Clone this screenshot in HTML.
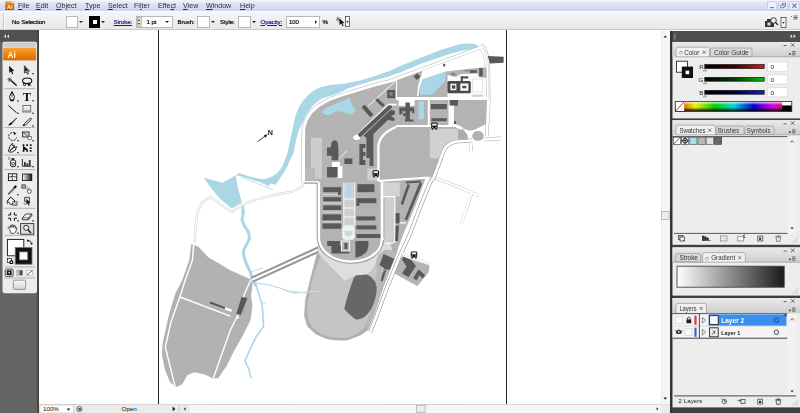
<!DOCTYPE html>
<html>
<head>
<meta charset="utf-8">
<title>Adobe Illustrator</title>
<style>
html,body{margin:0;padding:0;}
body{width:800px;height:413px;overflow:hidden;position:relative;background:#fff;font-family:"Liberation Sans",sans-serif;font-size:7.5px;color:#222;}
.abs{position:absolute;}
#menubar span,#ctrl .t,#rdock svg,#status svg,#ldock svg,#canvas svg{will-change:opacity;}
#ctrl .t{-webkit-text-stroke:0.18px currentColor;}
#menubar{left:0;top:0;width:800px;height:11px;background:linear-gradient(#f6f7fc 0%,#e4e8f6 25%,#d6dcf1 65%,#cbd3ee 100%);}
#menubar span{position:absolute;top:1.9px;font-size:7.1px;line-height:9px;color:#2e2e2e;}
#ctrl{left:0;top:11px;width:800px;height:19px;background:linear-gradient(#f6f6f6,#eeeeee 50%,#e9e9e9);border-top:1px solid #fbfbfb;border-bottom:1px solid #c9c9c9;box-sizing:border-box;}
#ctrl .t{position:absolute;top:5.7px;font-size:6.1px;line-height:8px;color:#000;white-space:nowrap;letter-spacing:-0.1px;}
#ctrl .lnk{color:#1a1a9a;text-decoration:underline;}
#ctrl .box{position:absolute;background:#fff;border:1px solid #b9b9b9;box-sizing:border-box;}
.dd{position:absolute;width:0;height:0;border-left:2px solid transparent;border-right:2px solid transparent;border-top:2.5px solid #222;}
#ldock{left:0;top:30px;width:39px;height:383px;background:#646464;}
#rdock{left:670px;top:31px;width:130px;height:382px;background:#404040;}
.panel{position:absolute;left:2.5px;width:127.5px;background:#ededed;}
.tab{position:absolute;font-size:7px;line-height:9px;color:#222;box-sizing:border-box;border:1px solid #a8a8a8;border-bottom:none;border-radius:2px 2px 0 0;background:#dcdcdc;text-align:center;white-space:nowrap;}
.tab.on{background:#f1f1f1;}
.tabbar{position:absolute;left:0;right:0;background:linear-gradient(#e6e6e6,#cfcfcf);}
#canvas{left:39px;top:30px;width:622px;height:374px;background:#fff;overflow:hidden;}
#vscroll{left:661px;top:30px;width:9px;height:374px;background:#f4f4f4;}
#status{left:39px;top:404px;width:631px;height:9px;background:#e9e9e9;}
</style>
</head>
<body>
<div id="canvas" class="abs">
<svg class="abs" style="left:-39px;top:-30px" width="800" height="413" viewBox="0 0 800 413">
<g id="map">
<!--MAPSTART-->
<!-- river -->
<path fill="#a9d7e6" d="M477.6,45.8 Q476.6,43.4 468.5,43.6 L460.5,44 L440.4,50.1 L420.3,58.1 L400,66 L390,70.8 L375.1,76 L360.1,80.5 L345.1,83.5 L330,85 L319.5,87.6 L314.6,90 L308.6,94.5 L302.6,101.3 L298.8,107.3 L295.8,114.8 L294.3,121 L292,131.8 L289.8,142.7 L287.3,153.6 L285,160 L282,166.9 L277.8,172.4 L272.3,176.6 L264,179.3 L255.7,177.9 L247.4,175.9 L239.2,173.1 L235.7,175.2 L240.5,175.9 L250.2,179.3 L261.3,182.8 L268.8,186.2 L270.2,183.5 L275.7,184.8 L278.4,180.7 L283,173.8 L287.2,166.9 L290,160 L293.4,153.6 L296,140.5 L299,129.6 L303.3,121 L304.8,117.8 L307.8,112.5 L311.6,107.3 L316,102.8 L322,98.5 L325.1,97.5 L332.6,95.3 L340,92.5 L348,88.6 L360,84.6 L375,80.2 L390,76 L400,72.5 L420.3,64 L445,55.4 L460.5,51 L475.6,48.2 Q478,47.6 477.6,45.8 Z"/>
<!-- west pond -->
<path fill="#a9d7e6" d="M204,177.7 L222.6,182.8 L235.7,175.2 L236.6,180 L237.8,187.6 L241.9,202.8 L231.6,208.6 L219.8,198.6 L210.2,186.9 Z"/>
<path d="M240.5,176.8 L273,189.7" stroke="#a9d7e6" stroke-width="0.8" fill="none"/>
<!-- stream -->
<path fill="none" stroke="#a9d7e6" stroke-width="3" stroke-linejoin="round" d="M242.2,204 L243.5,212.3 L242,220 L244.5,226 L248.5,232 L249.5,238 L247,244 L243.6,250 L243.8,256.2 L246.5,264.2 L250.5,272.3 L252.5,280.3 L256.5,286.3"/>
<path fill="none" stroke="#a9d7e6" stroke-width="1.6" stroke-linejoin="round" d="M256.5,286.3 L259.5,296.4 L261.6,303 L262.6,310.1 L263.6,326.2 L256.5,336.2 L250.5,348.3 L245,361 L248.5,368.2 L251.1,378.2"/>
<path fill="none" stroke="#a9d7e6" stroke-width="1" d="M252.5,282.3 L270.6,285.3 L290.7,291.4 L310,293.4"/>
<path fill="none" stroke="#bfe0ea" stroke-width="1" d="M280,288.1 L292,293.2 L306,292.2 L321,291.2"/>
<path fill="none" stroke="#a9d7e6" stroke-width="0.8" d="M250.5,271.9 L263.6,267.8 M262,303 L266,303 M241,211 L242.5,216"/>

<!-- thin road west -->
<g fill="none" stroke-linejoin="round">
<path stroke="#c2c2c2" stroke-width="2.1" d="M304.4,182 L302,187 L291.6,191.9 L272.3,195.4 L255.7,199.5 L243.3,204.4 L231.6,212 L210.2,196.8 L201.9,202.3 L197.8,211.3 L196.4,220 L195.2,233 L194.8,243"/>
<path stroke="#fff" stroke-width="1.3" d="M304.4,182 L302,187 L291.6,191.9 L272.3,195.4 L255.7,199.5 L243.3,204.4 L231.6,212 L210.2,196.8 L201.9,202.3 L197.8,211.3 L196.4,220 L195.2,233 L194.8,243"/>
</g>

<!-- double road to west field -->
<g fill="none">
<path stroke="#969696" stroke-width="6.2" d="M252,279.8 L321,248.4"/>
<path stroke="#fff" stroke-width="2.1" d="M252,279.8 L321,248.4"/>

</g>
<!-- west field -->
<path fill="#b2b2b2" d="M191.2,244.1 L198.2,246.6 L208.3,257.2 L230.4,270.3 L250.5,279.3 L252.5,284.3 L251,296 L252.5,306.1 L250.5,320.2 L242.5,336.2 L234.4,350.3 L226.4,366.4 L222.4,372 L218.3,378.2 L212.3,378.2 L204.3,374.2 L194.2,372.2 L187.2,375.2 L182.2,384.3 L176.1,387.3 L170.1,382.3 L165.1,370.2 L162.1,356 L162.4,345 L164.1,336.2 L169.1,314.1 L175.1,294 L182.2,280.3 L189.2,260.2 Z"/>
<g fill="none" stroke="#fff" stroke-width="1.4" stroke-linejoin="round">
<path d="M193.6,244.6 L192.4,260.2 L185.2,280.3 L180,296.5 L171,322 L165.3,347 L175.1,386.6"/>
<path d="M180,297 L230.4,316.1"/>
<path d="M250.5,280.3 L243.5,296.4 L238.4,314 L230.4,330 L213.3,378.2"/>
</g>
<path d="M210.3,301.6 L225.4,307.2 L224.8,309 L209.7,303.4 Z" fill="#555"/>
<path d="M225.4,307 L232,309.4 L231.2,312 L224.6,309.6 Z" fill="#fff"/>
<path d="M241.5,297 L247.5,298 L240.8,315.1 L236.4,314.1 Z" fill="#585858"/>
<circle cx="237.6" cy="317.4" r="1.3" fill="#fff"/>

<!-- ===== campus base ===== -->
<g fill="none" stroke-linejoin="round">
<path id="cb" stroke="#b4b4b4" stroke-width="7" d="M305,182.5 L305,138 L305.2,128.5 L307.4,121 L312,113.5 L319.5,106.8 L330,100.8 L345,95.5 L360,91 L375,86.5 L390,82.8 L400,79 L423,70.5 L445,62.5 L465,55 L480.6,49.2 L482.2,48 L484.4,53 L486,60 L486.6,70 L487,100 L486,124"/>
<path stroke="#fff" stroke-width="6" d="M305,182.5 L305,138 L305.2,128.5 L307.4,121 L312,113.5 L319.5,106.8 L330,100.8 L345,95.5 L360,91 L375,86.5 L390,82.8 L400,79 L423,70.5 L445,62.5 L465,55 L480.6,49.2 L482.2,48 L484.4,53 L486,60 L486.6,70 L487,100 L486,124"/>
</g>
<path fill="#b3b3b3" d="M305,182.5 L305,138 L305.2,128.5 L307.4,121 L312,113.5 L319.5,106.8 L330,100.8 L345,95.5 L360,91 L375,86.5 L390,82.8 L400,79 L423,70.5 L445,62.5 L465,55 L480.6,49.2 L482.2,48 L484.4,53 L486,60 L486.6,70 L487,100 L486,124 L480,127 L474,130 L468.5,130.5 L462,128 L466.8,134 L467.6,139 L455,140 Q448,141.6 444,146 Q441.6,150 439,158 L435.4,168 L432.2,176.6 L425.4,178.8 L415.3,206 L404,232.5 L397.5,250 L394,260 L383.1,287.5 L375.5,311 L368,330 L360.4,335.4 L346.3,339.4 L330.3,339.4 L316.2,334.4 L307.1,326.3 L304.1,316.3 L305.1,300.2 L310.2,280.1 L318,260 L318,182.5 Z"/>

<!-- south region tones -->
<path fill="#b0b0b0" d="M317.2,252 L310.4,278.2 L305.3,303.6 Q304.3,312 305.8,318.9 Q308,327 312.9,331.6 Q320,337.4 328.2,339.2 Q337,341 346,340.5 Q355,338.6 361.2,334.1 L368,330 L375.5,311 L383.1,287.5 L394,260 L397.5,250 L396,248 Z"/>
<path fill="#c5c5c5" d="M320.5,256 L312.4,279 L307.6,303.6 Q306.8,312 308,317.8 Q310,325 314.8,329.4 Q321,334.4 329,336.6 Q337,338.2 345.6,337.8 Q354,336 359.6,332 L365.4,326 L372.7,306.2 L376.5,290.9 L375.2,282 L380,262 L384,250 Z"/>
<path fill="#dedede" d="M317.6,238 L318.5,254 L344.7,280.7 L355.6,275.6 L366.3,274.4 L372,270 L378,259 L384,250 L392.6,250.2 L390,243 L383,238 Z"/>
<path fill="#b8b8b8" d="M384.2,251 Q391,250 397.5,252.6 L394,260 L383.1,287.5 L375.5,311 L368,330 L365.4,326 L372.7,306.2 L376.5,290.9 L375.2,282 L377.8,274 L376,261 Q378,253 384.2,251 Z"/>
<path fill="#b3b3b3" d="M318.8,182 L318.8,238 C319,250 331,260.6 349,261.6 C366,262.4 381,254 382,240 L382,182 Z"/>
<!-- stadium -->
<path fill="#676767" d="M353.6,278.2 L355.6,275.6 L366.3,274.4 Q372,276 375.2,282 Q377.4,287 376.5,292 Q375.6,299 372.7,306.2 Q369,313.6 363.8,317.6 Q359,320.4 354.9,318.9 L347.3,312.5 L344.2,308.7 L347.3,297.3 L351,285.8 Z"/>

<path fill="none" stroke="#c3e2ec" stroke-width="1" d="M292,293.2 L306,292.2 L321.6,291"/>
<!-- faint east roads -->
<g fill="none" stroke-linejoin="round" stroke-linecap="butt">
<path stroke="#c6c6c6" stroke-width="3.2" d="M434,177.4 L456,186 L478.7,195.6 M471.6,193.4 L461.3,223.3"/>
<path stroke="#fff" stroke-width="2.4" d="M433,177 L456,186 L478.7,195.6 M471.6,192.6 L461.3,223.3"/>
</g>
<!-- east road (white w/ outlines) -->
<g fill="none" stroke-linejoin="round">
<path stroke="#8c8c8c" stroke-width="3.9" d="M472,140.4 L456,141.6 Q449,143.4 445.4,147.4 Q443.4,151 440.6,159 L437,169 L433.4,178 L430.3,182 L420.2,207 L410.3,233 L398.8,258.6 L386.8,288 L378.4,311 L370.2,332"/>
<path stroke="#fff" stroke-width="2.8" d="M472,140.4 L456,141.6 Q449,143.4 445.4,147.4 Q443.4,151 440.6,159 L437,169 L433.4,178 L430.3,182 L420.2,207 L410.3,233 L398.8,258.6 L386.8,288 L378.4,311 L370.2,332"/>
<!-- roundabout roads -->
<path stroke="#a8a8a8" stroke-width="3.6" d="M484.6,139.4 L501,138.4 M470.5,143 L471,151 M487,124 L487,136"/>
<path stroke="#fff" stroke-width="2.8" d="M484.6,139.4 L501,138.4 M470.5,143 L471,151 M487,124 L487,136"/>
</g>
<ellipse cx="478" cy="136" rx="5.8" ry="5.1" fill="#b0b0b0"/>


<!-- top right white region -->
<path fill="#fff" d="M423.3,68.6 L481.4,47.2 L484.2,52 L485.8,59 L486.4,67.6 L478.8,67.8 L464.6,69.2 L445.8,71.4 L422.5,79.4 L419.6,87.6 L418.4,96 L417,96 L418,86 Z"/>
<!-- road along top (thin outlines) -->
<path fill="none" stroke="#bdbdbd" stroke-width="0.5" d="M423,70.2 L445,62.2 L465,54.8 L479.8,49.4 L483.2,54 L484.4,62 L484.8,68 M481.9,44.9 L485.8,52 L487.8,60 L488.6,70 L488.8,100"/>
<!-- north pond -->
<path fill="#a9d7e6" d="M422.6,79.4 L445.8,71.6 L445,81.5 L432.3,94.4 L420.3,95 L419.6,87.6 Z"/>
<!-- lake inside west -->
<path fill="#a9d7e6" d="M321,112 L325.6,108.3 L336,103.8 L349.6,97.8 L351.8,104.5 L355.6,110.5 L351,115 L343.6,112 L336,111.3 L330,115 L325.5,115 Z"/>
<!-- blue rect -->
<rect x="418.5" y="101.6" width="5.4" height="17.6" fill="#a9d7e6"/>

<path fill="#fcfcfc" d="M447.5,75 L455.9,76.9 L460.8,74 L477.7,73.6 L478.7,76.9 L486.4,77.9 L486.4,97.8 L447.5,97.8 Z"/>
<!-- light gray patches -->
<rect x="311" y="137.6" width="10.9" height="41" fill="#cdcdcd"/><rect x="305.4" y="168" width="9.4" height="12.6" fill="#b9b9b9"/>
<path fill="#d0d0d0" d="M429.8,128.8 L458.3,128.8 L458.3,140 L455,140 Q448,141.6 444,146 Q441.6,150 439,158.3 L429.8,158.3 Z"/><path fill="#acacac" d="M458.3,128.8 L463.5,130.5 L467.6,135.6 L467.4,139.4 L458.3,140 Z"/>
<rect x="367.4" y="168.6" width="11" height="12" fill="#cfcfcf"/>
<rect x="383.4" y="182.6" width="16.4" height="14" fill="#d3d3d3"/>
<rect x="384.6" y="196.6" width="9.6" height="46.4" fill="#cfcfcf"/>
<rect x="343.8" y="182.5" width="11" height="44" fill="#cfcfcf"/>
<rect x="344.8" y="183.4" width="9.4" height="13.8" fill="#c3d4dc"/>
<rect x="347.6" y="186" width="3.4" height="3" fill="#a9d7e6"/><rect x="347.6" y="191.4" width="3.4" height="3" fill="#a9d7e6"/>

<!-- white roads in campus -->
<g fill="none" stroke="#fff" stroke-linejoin="round">
<path stroke-width="3" d="M396.6,98.4 L487,98.4"/>
<path stroke-width="2" d="M396,126 L456,126 L462,128.4"/>
<path stroke-width="2" d="M428.8,99 L428.8,126"/><path stroke-width="5.4" d="M451.2,99 L451.2,125"/><path stroke-width="3" d="M452,124 L462,128.6"/>
<path stroke-width="2.4" d="M378.4,181 L378.4,147 Q379,134 396,127"/>
<path stroke-width="2" d="M378.4,181 L428.6,177.4"/>
<path stroke-width="1" d="M396.6,80 L396.6,100 M396.6,80 L368.4,106"/>
<path stroke-width="1.8" d="M396.6,104.6 L388.6,104.6 L355.6,136.6"/><path stroke-width="0.8" d="M371,120.4 L373.4,123 M337.8,159.6 L347.2,150.8"/>
<path stroke-width="2.6" d="M318.8,182 L318.8,238 C319,250 331,260.6 349,261.6 C366,262.4 381,254 382,240 L382,182"/>
<path stroke-width="1" d="M305,181.6 L318.8,181.6"/><path stroke-width="0.5" d="M322.6,194.6 H341.6 M322.6,203 H341.6 M322.6,212.2 H341.6 M322.6,221.8 H341.6"/>
<path stroke-width="0.9" d="M343.8,182.5 V226 M354.8,182.5 V226 M343.8,199 H354.8 M343.8,208 H354.8 M343.8,217 H354.8 M343.8,226 H354.8"/>
<path stroke-width="1.2" d="M394.8,196.6 L394.8,243 M383,196.6 H395.4 M385.5,243.2 H393 M398.8,222.8 L406,222.8"/>

</g>
<path fill="#fff" d="M353.4,136 q3.4,-1.6 7,0.6 q0.6,2.4 -2.4,3.4 q-3.6,0.4 -4.6,-1.6 z"/>
<path fill="none" stroke="#9c9c9c" stroke-width="1.1" d="M304.4,183.2 L317.2,183.2 L317.2,238 C317.6,251 330,262.4 349,263.2 C367,264 382.6,255 383.6,240"/>
<!-- white areas -->
<rect x="398.6" y="97.8" width="16" height="8" fill="#fff"/>
<path fill="#fff" d="M332,162 h8 v4 h2.4 v12 h-6 v-8 h-4.4 z"/>
<rect x="472.8" y="79" width="10" height="13" fill="#fff" stroke="#c8c8c8" stroke-width="0.5"/>
<rect x="472" y="94.6" width="10.8" height="2.2" fill="#cfcfcf"/>

<!-- dark buildings -->
<g fill="#595959">
<!-- top right -->
<path d="M487.8,56 L503.6,56.8 L503.6,62.8 L489.8,63.6 Z"/>
<rect x="469.8" y="70.2" width="7" height="2.7"/><rect x="464.4" y="70" width="5" height="1.5" fill="#8a8a8a"/>
<rect x="479.2" y="68" width="3.5" height="8.4"/>
<rect x="450.9" y="72.9" width="4.5" height="2.5" fill="#858585"/>

<path d="M417,73.2 L420.4,76.6 L417,80 L413.6,76.6 Z"/>
<!-- double square building -->
<path fill-rule="evenodd" d="M447.4,82.4 Q447.4,80.9 448.9,80.9 H469.3 Q470.8,80.9 470.8,82.4 V91.8 Q470.8,93.3 469.3,93.3 H448.9 Q447.4,93.3 447.4,91.8 Z M450.4,83.8 V90.3 H456.4 V83.8 Z M460.3,83.4 V90.8 H468.4 V83.4 Z" fill="#4a4a4a"/>
<rect x="451.9" y="85.3" width="3.4" height="3.4" fill="#4a4a4a"/><rect x="462.3" y="85.8" width="4" height="2.5" fill="#4a4a4a"/>
<rect x="460.8" y="76.4" width="7.5" height="2" fill="#4a4a4a"/><rect x="460.8" y="76.4" width="2" height="5" fill="#4a4a4a"/>
<!-- square bldg -->
<rect x="387.2" y="90" width="7.8" height="8.2"/><rect x="389.6" y="92.4" width="3" height="3.2" fill="#8a8a8a"/>
<!-- diagonal bars -->
<path d="M375.2,100 L377.4,98 L384.8,105 L382.6,107.2 Z"/>
<path d="M362,107.8 Q362.2,104.6 365.2,105.2 L373.4,114.4 L370.2,117.2 Z"/>
<!-- long diagonal complex -->
<path d="M357.6,134.2 L388.6,105.2 L391.6,105.4 L392,107.6 L360,137.6 Z"/>
<path d="M365.2,134 L391,109.4 L395,111 L394.8,114.6 L391,116 L395,118.8 L393.8,121 L388,120 L373.4,134 L373.4,166 L369.6,166 L369.6,158 L366.4,158 L366.4,138 L363.6,135.4 Z"/>
<!-- cross-shaped -->
<path d="M405.5,102.6 h4.4 v5 h4.4 v5.6 h-2 v-2 h-2.4 v8.4 h3.8 v2 h-8.8 v-2 h0.6 v-3.6 h-2.4 v-2.8 h2.4 v-2 h-3.2 v3 h-3 v-6.6 h6.2 z"/>
<!-- block east of blue -->
<rect x="430.8" y="104" width="16" height="5.2"/>
<rect x="431.4" y="118.2" width="15.4" height="3"/>
<rect x="449.6" y="100" width="8.4" height="5.6"/><rect x="454" y="121" width="2" height="3"/>
<!-- vertical bldgs mid -->
<path d="M359.4,144 h6 v4 h-2.4 v4 h2.4 v4 h-2.4 v4 h2.4 v5 h-6 z"/>
<path d="M331.6,142.4 q3.2,-4.4 6.2,0 l0.6,5 v12.8 h-6.8 v-4.4 h-4.6 v-8.2 h3.6 z"/>
<rect x="327" y="167" width="10.6" height="10.4"/>
<rect x="344.4" y="158.4" width="8" height="5.6"/>
<!-- grid left -->
<rect x="323.2" y="187.2" width="18" height="5"/>
<rect x="338" y="191.6" width="3" height="3.4"/>
<rect x="323.2" y="197.2" width="18" height="4.2"/>
<rect x="323.2" y="205.4" width="18" height="4.6"/>
<rect x="322.4" y="214.4" width="18.8" height="6"/>
<rect x="322.4" y="223.4" width="18.8" height="5.4"/>
<!-- grid right -->
<rect x="357.4" y="184.2" width="17" height="8"/>
<rect x="356.4" y="198.2" width="20" height="5"/><rect x="356.4" y="203" width="3" height="3"/>
<rect x="356.4" y="216.4" width="19" height="4"/>
<rect x="356.4" y="225.4" width="20" height="4"/>
<rect x="356.4" y="234" width="24" height="4"/>
<!-- U bottom -->
<rect x="327.2" y="241" width="13" height="5"/>
<path d="M331.4,246 h9.6 v5 h8.4 v2.4 h-18 z"/>
<rect x="344.4" y="243" width="3" height="6"/>
<path d="M355.4,241 H368.4 V246 Q368,255 356.4,257.4 L355.4,257.4 Z"/>
<!-- triangle region diag bars -->
<path d="M405.6,181.6 L420.8,180.4 L420.8,182.4 L405.8,183.6 Z"/>
<path d="M407.6,184 L410,185 L403,205 L400.6,204 Z"/>
<path d="M419.6,182.4 L422.2,183.4 L407,220.4 L404.6,219.4 Z"/>
<rect x="395.6" y="213" width="4" height="10.4"/><path d="M395.6,225.6 L399,225.6 L398,241 L395.2,241 Z"/>
<!-- near stadium -->
<path d="M383.6,254 L394.2,258.8 L389.6,270 L386.8,269 L382.6,281.6 L380.6,280.8 L384,268 L379.5,265 Z"/>
</g>
<path d="M382.2,268.6 L385.8,270.2 M381.6,271 L384.4,272.2" stroke="#eee" stroke-width="0.7" fill="none"/>
<!-- east block gray -->
<path fill="#b3b3b3" d="M401,256.2 L428.6,265 Q429.6,265.6 429.4,266.6 L428.6,272.2 L418,285.4 Q417.2,286.2 416.2,285.6 L394.6,273.6 Z"/>
<g fill="#595959">
<path d="M403.3,256.6 L411.3,260 L415.9,266 L408.6,277.2 L402,273.2 L406.6,266.6 L404,262.6 L402,260 Z"/>
<path d="M418.6,269.3 L425.2,275.2 L422.6,278.6 L419.2,275.2 L416.6,280.6 L413.2,277.9 Z"/>
</g>
<g fill="none"><path stroke="#c0c0c0" stroke-width="2.4" d="M400.6,252.8 L429.9,264"/><path stroke="#fff" stroke-width="1.7" d="M400.2,252.6 L430.4,264.2"/></g>
<!-- fountain -->
<rect x="342.6" y="226.4" width="11.8" height="13" rx="2.4" fill="#f2f2f2" stroke="#fff" stroke-width="0.6"/>
<path d="M344.4,231 h8.4 q0,5.4 -4.2,5.4 q-4.2,0 -4.2,-5.4z" fill="#bcdde8"/>
<rect x="341.4" y="241" width="8" height="10" fill="none" stroke="#fff" stroke-width="0.9"/>

<!-- bus icons -->
<g id="bus1"><rect x="431.2" y="122.6" width="6.4" height="6" rx="1.2" fill="#111"/><rect x="432.2" y="123.6" width="4.4" height="2" fill="#eee"/><rect x="432" y="126.8" width="1.2" height="0.9" fill="#eee"/><rect x="435.6" y="126.8" width="1.2" height="0.9" fill="#eee"/><rect x="431.8" y="128.4" width="1.4" height="1.4" fill="#111"/><rect x="435.6" y="128.4" width="1.4" height="1.4" fill="#111"/></g>
<use href="#bus1" x="-58.6" y="47.6"/>
<use href="#bus1" x="-20.4" y="128.8"/>
<!-- marker -->
<path d="M443.8,63.4 l1.8,1.4 l-1.2,2.4 l-1.6,-2.2z" fill="#555"/>
<!-- N arrow -->
<path d="M257.6,141.6 L266,135.4" stroke="#222" stroke-width="0.9"/><path d="M267.6,134.2 L263.8,135.2 L265.8,137.8 Z" fill="#222"/>
<text x="267.8" y="134.8" font-family="Liberation Sans,sans-serif" font-size="7.2" font-weight="bold" fill="#222">N</text>

<!--MAPEND-->
</g>
<line x1="158.5" y1="30" x2="158.5" y2="404" stroke="#222" stroke-width="1"/>
<line x1="506.5" y1="30" x2="506.5" y2="404" stroke="#222" stroke-width="1"/>
</svg>
</div>

<div id="menubar" class="abs">
<svg class="abs" style="left:4px;top:0" width="12" height="11" viewBox="0 0 12 11"><defs><linearGradient id="aig" x1="0" y1="0" x2="0" y2="1"><stop offset="0" stop-color="#e88a22"/><stop offset="0.6" stop-color="#d0690c"/><stop offset="1" stop-color="#a84a02"/></linearGradient></defs><rect x="1.3" y="2" width="8.8" height="8" rx="0.6" fill="url(#aig)"/><rect x="1" y="1.2" width="9.4" height="1.8" fill="#f2a64a"/><rect x="7.6" y="1.6" width="2" height="1.6" fill="#fff" opacity="0.8"/><text x="3" y="8.6" font-family="Liberation Sans,sans-serif" font-size="5.4" font-weight="bold" fill="#fff">Ai</text></svg>
<span style="left:18px"><u>F</u>ile</span>
<span style="left:36px"><u>E</u>dit</span>
<span style="left:56px"><u>O</u>bject</span>
<span style="left:85px"><u>T</u>ype</span>
<span style="left:108px"><u>S</u>elect</span>
<span style="left:134px">Fi<u>l</u>ter</span>
<span style="left:158px">Effe<u>c</u>t</span>
<span style="left:183px"><u>V</u>iew</span>
<span style="left:206px"><u>W</u>indow</span>
<span style="left:240px"><u>H</u>elp</span>
<svg class="abs" style="left:764px;top:0" width="36" height="11" viewBox="764 0 36 11">
<g fill="#eef1fb" stroke="#b4c0de" stroke-width="0.7"><rect x="767.6" y="1.6" width="9.2" height="8.2" rx="1"/><rect x="778.6" y="1.6" width="9.2" height="8.2" rx="1"/><rect x="789.6" y="1.6" width="9.6" height="8.2" rx="1"/></g>
<path d="M770.2 7.6 h3.6" stroke="#5a78b0" stroke-width="1.1"/>
<g fill="none" stroke="#5a78b0" stroke-width="0.8"><rect x="782.4" y="3.4" width="3.2" height="2.8"/><rect x="780.8" y="5" width="3.2" height="2.8" fill="#eef1fb"/></g>
<path d="M792.4 3.6 L796.6 7.8 M796.6 3.6 L792.4 7.8" stroke="#5a78b0" stroke-width="1.1"/>
</svg>
</div>

<div id="ctrl" class="abs">
<div class="abs" style="left:3px;top:1px;width:2px;height:17px;border-left:1px solid #c4c4c4;border-right:1px solid #fff;box-sizing:border-box"></div>
<span class="t" style="left:12px">No Selection</span>
<div class="box" style="left:66px;top:4px;width:12px;height:12px"></div>
<div class="dd" style="left:79px;top:9px"></div>
<div class="box" style="left:89px;top:4px;width:11px;height:12px;background:#000;border-color:#000"><div class="abs" style="left:3px;top:3px;width:3.5px;height:4px;background:#fff"></div></div>
<div class="dd" style="left:101px;top:9px"></div>
<span class="t lnk" style="left:113.5px">Stroke:</span>
<div class="box" style="left:136px;top:4px;width:37px;height:12px"></div>
<div class="abs" style="left:137px;top:5px;width:5px;height:10px;background:#e4e4e4;border:1px solid #bbb;box-sizing:border-box"></div>
<div class="dd" style="left:138px;top:10.5px;border-left-width:1.5px;border-right-width:1.5px;border-top-width:2px"></div>
<div class="dd" style="left:138px;top:6.5px;border-left-width:1.5px;border-right-width:1.5px;border-top:none;border-bottom:2px solid #222"></div>
<span class="t" style="left:146.5px">1 pt</span>
<div class="dd" style="left:164.5px;top:9px"></div>
<span class="t" style="left:177.5px">Brush:</span>
<div class="box" style="left:196.5px;top:4px;width:13px;height:12px"></div>
<div class="dd" style="left:210.5px;top:9px"></div>
<span class="t" style="left:220px">Style:</span>
<div class="box" style="left:238px;top:4px;width:12.5px;height:12px"></div>
<div class="dd" style="left:252px;top:9px"></div>
<span class="t lnk" style="left:260.5px">Opacity:</span>
<div class="box" style="left:286px;top:4px;width:34px;height:12px"></div>
<span class="t" style="left:289px">100</span>
<div class="abs" style="left:314.5px;top:7.5px;width:0;height:0;border-top:2px solid transparent;border-bottom:2px solid transparent;border-left:2.5px solid #222"></div>
<span class="t" style="left:322.5px">%</span>
<svg class="abs" style="left:335px;top:3px" width="16" height="13" viewBox="0 0 16 13"><path d="M1.5 2.5 L5 6 M5 2.5 L1.5 6 M3.2 1.5 V7 M0.8 4.2 H5.8" stroke="#555" stroke-width="0.6" fill="none"/><path d="M4.5 3.5 L4.5 10 L6.3 8.6 L7.6 11.2 L8.6 10.7 L7.3 8.2 L9.4 8 Z" fill="#111"/><rect x="10.5" y="1.5" width="4" height="10" fill="#f8f8f8" stroke="#333" stroke-width="0.7"/><path d="M11.3 6 h2.4 l-1.2 1.8z" fill="#111"/></svg>
<svg class="abs" style="left:762px;top:3px" width="38" height="14" viewBox="0 0 38 14"><rect x="3" y="6" width="9" height="6" fill="#333"/><rect x="5" y="4" width="4" height="2" fill="#333"/><rect x="5.5" y="7.5" width="3" height="3" fill="#ddd"/><circle cx="11.5" cy="5.5" r="2.8" fill="#f4f4f4" stroke="#222" stroke-width="0.9"/><path d="M13.5 7.5 L16 10" stroke="#222" stroke-width="1.3"/><rect x="19" y="2.5" width="5" height="10" fill="#f8f8f8" stroke="#333" stroke-width="0.7"/><path d="M20.3 7 h2.4 l-1.2 1.8z" fill="#111"/><path d="M29 1.5 h1 M31.5 1 h4 M31.5 2.5 h4 M31.5 4 h4" stroke="#444" stroke-width="0.8"/></svg>
</div>
<div id="ldock" class="abs">
<svg class="abs" style="left:0;top:0" width="39" height="383" viewBox="0 30 39 383" font-family="Liberation Sans,sans-serif">
<defs>
<linearGradient id="gor" x1="0" y1="0" x2="0" y2="1"><stop offset="0" stop-color="#f9a53a"/><stop offset="0.5" stop-color="#ef8410"/><stop offset="1" stop-color="#d96a05"/></linearGradient>
<linearGradient id="ggr" x1="0" y1="0" x2="1" y2="0"><stop offset="0" stop-color="#fff"/><stop offset="1" stop-color="#111"/></linearGradient>
<linearGradient id="gbtn" x1="0" y1="0" x2="0" y2="1"><stop offset="0" stop-color="#fafafa"/><stop offset="1" stop-color="#d2d2d2"/></linearGradient>
</defs>
<rect x="0" y="30" width="39" height="11.5" fill="#505050"/>
<rect x="37.4" y="30" width="1.4" height="383" fill="#3e3e3e"/>
<path d="M6 34.2 L4 36.2 L6 38.2 Z M9 34.2 L7 36.2 L9 38.2 Z" fill="#e8e8e8"/>
<path d="M2.5 44 Q2.5 41.8 4.5 41.8 H35 Q37 41.8 37 44 V291 Q37 293.3 35 293.3 H4.5 Q2.5 293.3 2.5 291 Z" fill="#ececec"/>
<rect x="3.5" y="42.5" width="32.5" height="5" fill="#cfcfcf"/>
<rect x="3.2" y="47.8" width="33" height="12.6" fill="url(#gor)"/>
<text x="7.5" y="57.5" font-size="8.2" font-weight="bold" fill="#fff">Ai</text>
<g stroke="#9a9a9a" stroke-width="0.7">
<path d="M4.5 88.7 H35 M4.5 127.5 H35 M4.5 155 H35 M4.5 169.6 H35 M4.5 208.3 H35 M4.5 235.3 H35 M4.5 266.9 H35 M4.5 278 H35"/>
</g>
<g fill="#111" stroke="none">
<!-- selection arrows -->
<path d="M9.2 65.7 L9.2 73 L10.9 71.6 L12.2 74.2 L13.3 73.7 L12 71.2 L14.3 71 Z"/>
<path d="M24.4 65.7 L24.4 73 L26.1 71.6 L27.4 74.2 L28.5 73.7 L27.2 71.2 L29.5 71 Z" fill="#fff" stroke="#111" stroke-width="0.8"/>
<path d="M25 67 L25 71.6 L26 70.8 L28.5 70.6 Z"/>
<rect x="32.4" y="73" width="1.3" height="1.3"/>
<!-- wand -->
<path d="M11 80.5 L16.6 85.6" stroke="#111" stroke-width="1.4"/>
<path d="M9.6 77.2 V82 M7.4 79.6 H12 M8 78 L11.4 81.3 M11.4 78 L8 81.3" stroke="#333" stroke-width="0.6"/>
<!-- lasso -->
<ellipse cx="27.2" cy="80.8" rx="4.6" ry="2.8" fill="none" stroke="#111" stroke-width="1.1"/>
<path d="M23.8 82.5 Q22.8 84.6 24.3 86.2 M24.2 83 Q26 84 25.2 86" fill="none" stroke="#111" stroke-width="0.9"/>
<path d="M28 82.5 L28 86.3 L29.2 85.4 L31.6 85.6 Z"/>
<!-- pen -->
<path d="M12 91.5 L14.4 96.6 L13.6 100.2 L10.4 100.2 L9.6 96.6 Z" fill="#fff" stroke="#111" stroke-width="1"/>
<path d="M12 92 V97.4" stroke="#111" stroke-width="0.8"/><rect x="10.3" y="99.6" width="3.4" height="1.6"/>
<rect x="17.3" y="100.3" width="1.3" height="1.3"/>
<!-- T -->
<text x="22.8" y="100.5" font-family="Liberation Serif,serif" font-size="12.5" font-weight="bold">T</text>
<rect x="32.4" y="100" width="1.3" height="1.3"/>
<!-- line -->
<path d="M8.3 105.3 L16.6 112.8" stroke="#111" stroke-width="1"/><rect x="17.3" y="112.6" width="1.3" height="1.3"/>
<!-- rect -->
<rect x="22.9" y="105.5" width="7.8" height="6.5" fill="url(#gbtn)" stroke="#555" stroke-width="0.8"/><rect x="24" y="110.4" width="6.7" height="1.6" fill="#999"/>
<rect x="32.4" y="112.6" width="1.3" height="1.3"/>
<!-- brush -->
<path d="M16.6 117.4 L11.4 122.2 L12.6 123.2 L17 118.2 Z" fill="#444"/><path d="M11.4 122.2 Q9 123 8.2 125.4 Q11 125.6 12.6 123.2 Z"/>
<!-- pencil -->
<path d="M30.6 118 L24.6 123.4 L23 125.8 L25.8 124.8 L31.6 119.2 Z" fill="#fff" stroke="#111" stroke-width="0.9"/><path d="M23 125.8 L24 124 L25 125 Z"/>
<rect x="32.4" y="125.2" width="1.3" height="1.3"/>
<!-- rotate -->
<path d="M15 133.2 A4 4 0 1 0 16.6 137.4" fill="none" stroke="#111" stroke-width="0.9" stroke-dasharray="2.2 0.9"/><path d="M13.6 132 L16.4 133.4 L14 135 Z"/>
<rect x="17.3" y="140" width="1.3" height="1.3"/>
<!-- scale -->
<rect x="22.6" y="132" width="6.4" height="5" fill="#ddd" stroke="#222" stroke-width="0.9"/><path d="M22.6 132 L29 137" stroke="#222" stroke-width="0.7"/><rect x="28" y="136.4" width="3.4" height="3" fill="#f4f4f4" stroke="#444" stroke-width="0.6"/>
<rect x="32.4" y="140" width="1.3" height="1.3"/>
<!-- warp -->
<path d="M8.4 151.6 Q9 146 12.4 143.2 Q12 147 14.2 145 Q13.4 149 16.6 146.6 Q16 151 12.4 152 Q10 152.4 8.4 151.6 Z" fill="none" stroke="#111" stroke-width="0.9"/><path d="M10 150.6 L14.6 146.4" stroke="#111" stroke-width="1.1"/>
<rect x="17.3" y="152" width="1.3" height="1.3"/>
<!-- free transform -->
<g fill="#222"><rect x="22.6" y="144.2" width="1.8" height="1.8"/><rect x="26.2" y="144.2" width="1.8" height="1.8"/><rect x="29.8" y="144.2" width="1.8" height="1.8"/><rect x="29.8" y="147.2" width="1.8" height="1.8"/><rect x="22.6" y="150" width="1.8" height="1.8"/><rect x="26.2" y="150" width="1.8" height="1.8"/><rect x="29.8" y="150" width="1.8" height="1.8"/></g>
<path d="M23 145.6 L23 151 L24.4 150 L28.4 149.8 Z"/>
<!-- symbol sprayer -->
<rect x="10.6" y="160" width="5" height="6.6" rx="1.4" fill="#f4f4f4" stroke="#111" stroke-width="0.9"/><rect x="11.6" y="158" width="2.6" height="2" fill="#333"/><circle cx="13.2" cy="163.8" r="1.4" fill="none" stroke="#111" stroke-width="0.7"/><path d="M8 157.8 h1 M8.6 159.4 h1 M9.6 158.2 h0.8" stroke="#222" stroke-width="0.7"/>
<rect x="17.3" y="166" width="1.3" height="1.3"/>
<!-- graph -->
<path d="M22.4 159 V166.2 H31.4" fill="none" stroke="#111" stroke-width="0.9"/><rect x="24" y="162" width="1.8" height="4" fill="#333"/><rect x="26.4" y="163.4" width="1.8" height="2.6" fill="#333"/><rect x="28.8" y="160" width="1.8" height="6" fill="#333"/>
<rect x="32.4" y="166" width="1.3" height="1.3"/>
<!-- mesh -->
<rect x="8.4" y="173.8" width="8.4" height="6.8" fill="#f4f4f4" stroke="#111" stroke-width="0.9"/><path d="M8.4 177.2 Q12.4 175.6 16.8 177.2 M12.6 173.8 Q11.4 177 12.6 180.6" fill="none" stroke="#111" stroke-width="0.7"/>
<!-- gradient -->
<rect x="22.4" y="174" width="9.4" height="6.6" fill="url(#ggr)" stroke="#111" stroke-width="0.8"/>
<!-- eyedropper -->
<path d="M16.2 185.4 Q17.4 186.6 16 187.8 L14.6 189 L13 187.6 L14.4 186.2 Q15.2 184.8 16.2 185.4 Z"/><path d="M13.6 188 L9 192.8 L8.4 194 L9.8 193.6 L14.4 188.8" fill="#fff" stroke="#111" stroke-width="0.8"/>
<rect x="17.3" y="194" width="1.3" height="1.3"/>
<!-- blend -->
<rect x="21.8" y="184.8" width="3.6" height="3.4" fill="#999" stroke="#333" stroke-width="0.6"/><circle cx="29.4" cy="191.4" r="2" fill="#eee" stroke="#333" stroke-width="0.7"/><path d="M25 187.6 L28.2 190.2 M26.6 186.4 L30.6 189.8" stroke="#555" stroke-width="0.7"/>
<!-- live paint -->
<path d="M10.6 197 L15 201 L11.4 205 L7.4 201 Z" fill="#f4f4f4" stroke="#111" stroke-width="1"/><path d="M12.6 201.6 h4.6 v3.8 h-4.6z" fill="#bbb" stroke="#333" stroke-width="0.6"/><path d="M7.4 201 Q6.6 203 7.6 204" stroke="#111" fill="none" stroke-width="0.8"/>
<!-- live paint sel -->
<path d="M24.6 197.4 h5 v4 h-5z" fill="#ddd" stroke="#222" stroke-width="0.8"/><path d="M26.4 199 L26.4 204.6 L27.8 203.6 L28.8 205.8 L29.8 205.4 L28.8 203.2 L30.6 203 Z"/><path d="M23.6 203.4 q1.6 1.6 2.6 0.2" stroke="#222" fill="none" stroke-width="0.7"/>
<!-- crop area -->
<path d="M10.6 212.4 V215 H8 M14.4 212.4 V215 H17 M10.6 220.8 V218.2 H8 M14.4 220.8 V218.2 H17" fill="none" stroke="#111" stroke-width="1"/>
<rect x="17.3" y="220.2" width="1.3" height="1.3"/>
<!-- eraser -->
<path d="M25.6 214 L31.8 214 L28.4 218 L22.4 218 Z" fill="#f8f8f8" stroke="#111" stroke-width="0.8"/><path d="M22.4 218 V219.8 H28.4 V218 M28.4 219.8 L31.8 215.6 V214" fill="#ccc" stroke="#111" stroke-width="0.7"/>
<rect x="32.4" y="220.2" width="1.3" height="1.3"/>
<!-- hand -->
<path d="M9.6 229.4 L8 227.6 Q8.6 226.2 9.8 227.4 L10.4 228 L10.2 225.6 Q11 224.6 11.6 225.6 L11.9 227.4 L12.2 224.9 Q13.1 224 13.6 225.1 L13.6 227.5 L14.4 225.6 Q15.3 225.2 15.5 226.2 L15.2 228.4 L16 227.4 Q16.9 227.4 16.8 228.4 L15.6 232 L14.4 233.3 L10.8 233.3 Z" fill="#fff" stroke="#111" stroke-width="0.7"/>
<rect x="17.3" y="232.6" width="1.3" height="1.3"/>
<!-- zoom selected -->
<rect x="20.6" y="223.6" width="13.2" height="10.6" fill="#dcdcdc" stroke="#333" stroke-width="0.9"/>
<circle cx="26.2" cy="227.8" r="2.5" fill="#f6f6f6" stroke="#111" stroke-width="0.9"/><path d="M28 229.8 L31 233" stroke="#111" stroke-width="1.3"/>
<!-- fill/stroke -->
<rect x="7.4" y="239.4" width="16.4" height="16.4" fill="#fff" stroke="#111" stroke-width="0.9"/>
<rect x="15.2" y="247.4" width="16.8" height="16.8" fill="#111" stroke="#777" stroke-width="0.8"/>
<rect x="19.6" y="252" width="7.8" height="7.8" fill="#fff" stroke="#999" stroke-width="0.9"/>
<path d="M27.6 240.6 Q30.6 240.2 31.6 243.2" fill="none" stroke="#111" stroke-width="0.8"/><path d="M27.2 239.2 L27.2 242 L29.4 240.8 Z M30.2 243 L32.8 243 L31.8 245 Z"/>
<rect x="7.6" y="258.6" width="3.8" height="3.8" fill="#fff" stroke="#111" stroke-width="0.7"/><rect x="9.6" y="260.4" width="3.6" height="3.6" fill="#111"/><rect x="10.7" y="261.5" width="1.4" height="1.4" fill="#fff"/>
<!-- small modes -->
<rect x="5.2" y="269" width="8" height="7.4" rx="1.2" fill="#d6d6d6" stroke="#333" stroke-width="0.8"/><rect x="6.8" y="270.4" width="4.8" height="4.6" fill="#111"/><rect x="8.4" y="271.9" width="1.6" height="1.6" fill="#ddd"/>
<rect x="16.6" y="270.2" width="5.8" height="5" fill="url(#ggr)" stroke="#888" stroke-width="0.5"/>
<rect x="26.8" y="270.2" width="5.8" height="5" fill="#fff" stroke="#999" stroke-width="0.5"/><path d="M27 275 L32.4 270.4" stroke="#c01818" stroke-width="0.9"/>
<!-- screen mode -->
<rect x="13.4" y="280.2" width="12.2" height="9.2" rx="1" fill="url(#gbtn)" stroke="#8a8a8a" stroke-width="0.9"/>
</g>
</svg>
</div>
<div id="vscroll" class="abs">
<svg class="abs" style="left:0;top:0" width="9" height="374" viewBox="661 30 9 374">
<rect x="661" y="30" width="9" height="374" fill="#f6f6f6"/>
<path d="M661.3 30 V404" stroke="#e4e4e4" stroke-width="0.6"/>
<path d="M663.4 37.6 h3.6 l-1.8 -2.2z" fill="#222"/>
<path d="M663.4 397.6 h3.6 l-1.8 2.2z" fill="#222"/>
<rect x="661.6" y="211.4" width="7.6" height="8" fill="#ececec" stroke="#aaa" stroke-width="0.7"/>
</svg></div>
<div id="status" class="abs">
<svg class="abs" style="left:0;top:0" width="631" height="9" viewBox="39 404 631 9" font-family="Liberation Sans,sans-serif" font-size="6.2">
<rect x="39" y="404" width="631" height="9" fill="#ebebeb"/>
<path d="M39 404.4 H670" stroke="#c8c8c8" stroke-width="0.7"/>
<rect x="40" y="405" width="33.6" height="8" fill="#fff" stroke="#c2c2c2" stroke-width="0.6"/>
<text x="43" y="411.4" fill="#111">100%</text>
<path d="M66.6 408.6 h3.8 l-1.9 2.2z" fill="#222"/>
<circle cx="79.4" cy="409" r="2.6" fill="#ddd" stroke="#444" stroke-width="0.7"/><rect x="78.4" y="408" width="2.4" height="2.4" fill="#555"/>
<text x="121.6" y="411.4" fill="#111">Open</text>
<path d="M172.6 406.6 v4.6 l2.8 -2.3z" fill="#111"/>
<path d="M179 405 V413" stroke="#bdbdbd" stroke-width="0.7"/>
<path d="M185.6 407.2 l-1.8 1.7 l1.8 1.7z" fill="#222"/>
<rect x="190" y="405" width="471" height="8" fill="#f6f6f6"/>
<rect x="416.6" y="405.2" width="8.6" height="7.4" fill="#ececec" stroke="#aaa" stroke-width="0.7"/>
<path d="M656.6 407.2 l1.8 1.7 l-1.8 1.7z" fill="#222"/>
<rect x="661" y="404.6" width="9" height="8.4" fill="#ebebeb"/>
</svg></div>
<div id="rdock" class="abs">
<svg class="abs" style="left:0;top:0" width="130" height="382" viewBox="670 31 130 382" font-family="Liberation Sans,sans-serif" font-size="6.6">
<defs>
<linearGradient id="tbg" x1="0" y1="0" x2="0" y2="1"><stop offset="0" stop-color="#ebebeb"/><stop offset="1" stop-color="#cdcdcd"/></linearGradient>
<linearGradient id="gR" x1="0" y1="0" x2="1" y2="0"><stop offset="0" stop-color="#000"/><stop offset="0.5" stop-color="#400000"/><stop offset="1" stop-color="#e81010"/></linearGradient>
<linearGradient id="gG" x1="0" y1="0" x2="1" y2="0"><stop offset="0" stop-color="#000"/><stop offset="0.5" stop-color="#003800"/><stop offset="1" stop-color="#10c010"/></linearGradient>
<linearGradient id="gB" x1="0" y1="0" x2="1" y2="0"><stop offset="0" stop-color="#000"/><stop offset="0.5" stop-color="#000040"/><stop offset="1" stop-color="#1020c8"/></linearGradient>
<linearGradient id="gSp" x1="0" y1="0" x2="1" y2="0"><stop offset="0" stop-color="#e00000"/><stop offset="0.17" stop-color="#f0f000"/><stop offset="0.34" stop-color="#00d000"/><stop offset="0.5" stop-color="#00d8d8"/><stop offset="0.67" stop-color="#0000d8"/><stop offset="0.84" stop-color="#e000e0"/><stop offset="1" stop-color="#e00000"/></linearGradient>
<linearGradient id="gSpV" x1="0" y1="0" x2="0" y2="1"><stop offset="0" stop-color="#fff" stop-opacity="0.9"/><stop offset="0.35" stop-color="#fff" stop-opacity="0"/><stop offset="0.6" stop-color="#000" stop-opacity="0"/><stop offset="1" stop-color="#000" stop-opacity="1"/></linearGradient>
<linearGradient id="gGr" x1="0" y1="0" x2="1" y2="0"><stop offset="0" stop-color="#fff"/><stop offset="1" stop-color="#1a1a1a"/></linearGradient>
</defs>
<!-- dock header -->
<rect x="670" y="31" width="130" height="11" fill="#4e4e4e"/><rect x="670" y="31" width="2.5" height="382" fill="#343434"/>
<rect x="673.5" y="33.5" width="2.5" height="6" fill="#6e6e6e"/>
<path d="M790.6 34.3 L792.6 36.3 L790.6 38.3 Z M793.6 34.3 L795.6 36.3 L793.6 38.3 Z" fill="#eee"/>

<!-- COLOR PANEL -->
<rect x="672.5" y="42" width="127.5" height="76.4" fill="#ededed"/>
<rect x="672.5" y="42" width="127.5" height="14.8" fill="url(#tbg)"/>
<path d="M676 56.8 V49 Q676 47.2 677.8 47.2 H707.6 Q709.4 47.2 709.4 49 V56.8 Z" fill="#f0f0f0" stroke="#9a9a9a" stroke-width="0.7"/>
<path d="M710.4 56.4 V49.6 Q710.4 48 712 48 H750.4 Q752 48 752 49.6 V56.4 Z" fill="#d9d9d9" stroke="#9a9a9a" stroke-width="0.7"/>
<path d="M709.4 56.8 H800" stroke="#9a9a9a" stroke-width="0.7"/>
<text x="678.6" y="54.4" font-size="5" fill="#444">◇</text>
<text x="684.2" y="54.6" fill="#333" textLength="15.3" lengthAdjust="spacingAndGlyphs">Color</text>
<path d="M702.6 50.6 L705.8 53.8 M705.8 50.6 L702.6 53.8" stroke="#444" stroke-width="0.7"/>
<text x="714" y="54.6" fill="#333" textLength="34.6" lengthAdjust="spacingAndGlyphs">Color Guide</text>
<path d="M783.6 45.6 h3" stroke="#555" stroke-width="0.9"/><path d="M791 43.2 L794.4 46.6 M794.4 43.2 L791 46.6" stroke="#444" stroke-width="0.8"/>
<path d="M788.6 53.4 h2.6 l-1.3 1.8z" fill="#222"/><path d="M792 51.6 h3.6 M792 53.2 h3.6 M792 54.8 h3.6" stroke="#555" stroke-width="0.8"/>
<rect x="676.4" y="61.2" width="11" height="11" fill="#fff" stroke="#111" stroke-width="0.8"/>
<rect x="681.8" y="66.6" width="11.2" height="11.4" fill="#111"/>
<rect x="685.6" y="70.6" width="3.6" height="3.6" fill="#fff"/>
<text x="699.2" y="69" font-size="6.2" fill="#222">R</text>
<text x="698.6" y="82" font-size="6.2" fill="#222">G</text>
<text x="699.2" y="95" font-size="6.2" fill="#222">B</text>
<rect x="704.8" y="64.6" width="59.4" height="3.8" fill="url(#gR)" stroke="#111" stroke-width="0.7"/>
<rect x="704.8" y="77.4" width="59.4" height="3.8" fill="url(#gG)" stroke="#111" stroke-width="0.7"/>
<rect x="704.8" y="90.4" width="59.4" height="3.8" fill="url(#gB)" stroke="#111" stroke-width="0.7"/>
<g fill="#f4f4f4" stroke="#555" stroke-width="0.5"><path d="M705 68.8 l1.7 2.2 h-3.4z"/><path d="M705 81.6 l1.7 2.2 h-3.4z"/><path d="M705 94.6 l1.7 2.2 h-3.4z"/></g>
<g fill="#fff" stroke="#d4d4d4" stroke-width="0.6"><rect x="767.6" y="62" width="20" height="9.2"/><rect x="767.6" y="74.8" width="20" height="9.2"/><rect x="767.6" y="87.6" width="20" height="9.2"/></g>
<text x="770.6" y="69" font-size="6.2" fill="#222">0</text>
<text x="770.6" y="81.8" font-size="6.2" fill="#222">0</text>
<text x="770.6" y="94.6" font-size="6.2" fill="#222">0</text>
<rect x="675.2" y="101.4" width="116.6" height="10" fill="url(#gSp)"/>
<rect x="675.2" y="101.4" width="116.6" height="10" fill="url(#gSpV)"/>
<rect x="782" y="102" width="9.6" height="3.6" fill="#fff"/><rect x="782" y="105.6" width="9.6" height="5.6" fill="#000"/>
<rect x="675.6" y="101.8" width="8.6" height="9.2" fill="#fff"/><path d="M675.8 110.8 L684 102" stroke="#d01010" stroke-width="0.9"/>
<rect x="675.2" y="101.4" width="116.6" height="10" fill="none" stroke="#333" stroke-width="0.8"/>

<!-- SWATCHES PANEL -->
<rect x="672.5" y="120.2" width="127.5" height="124.6" fill="#ededed"/>
<rect x="672.5" y="120.2" width="127.5" height="14.6" fill="url(#tbg)"/>
<path d="M676 134.8 V127 Q676 125.2 677.8 125.2 H713.6 Q715.4 125.2 715.4 127 V134.8 Z" fill="#f0f0f0" stroke="#9a9a9a" stroke-width="0.7"/>
<path d="M716.2 134.4 V127.6 Q716.2 126 717.8 126 H742.4 Q744 126 744 127.6 V134.4 Z" fill="#d9d9d9" stroke="#9a9a9a" stroke-width="0.7"/>
<path d="M745 134.4 V127.6 Q745 126 746.6 126 H772.4 Q774 126 774 127.6 V134.4 Z" fill="#d9d9d9" stroke="#9a9a9a" stroke-width="0.7"/>
<path d="M715.4 134.8 H800" stroke="#9a9a9a" stroke-width="0.7"/>
<text x="679.4" y="132.6" fill="#333" textLength="26.1" lengthAdjust="spacingAndGlyphs">Swatches</text>
<path d="M708.2 128.6 L711.4 131.8 M711.4 128.6 L708.2 131.8" stroke="#444" stroke-width="0.7"/>
<text x="718" y="132.6" fill="#333" textLength="21.1" lengthAdjust="spacingAndGlyphs">Brushes</text>
<text x="746.8" y="132.6" fill="#333" textLength="23.7" lengthAdjust="spacingAndGlyphs">Symbols</text>
<path d="M783.6 123.8 h3" stroke="#555" stroke-width="0.9"/><path d="M791 121.4 L794.4 124.8 M794.4 121.4 L791 124.8" stroke="#444" stroke-width="0.8"/>
<path d="M788.6 131.6 h2.6 l-1.3 1.8z" fill="#222"/><path d="M792 129.8 h3.6 M792 131.4 h3.6 M792 133 h3.6" stroke="#555" stroke-width="0.8"/>
<path d="M672.5 136.6 H787.6" stroke="#333" stroke-width="0.8"/>
<rect x="673.4" y="137.2" width="7" height="7.2" fill="#fff" stroke="#333" stroke-width="0.6"/><path d="M673.6 144.2 L680.2 137.4" stroke="#c01010" stroke-width="0.8"/>
<rect x="681.4" y="137.2" width="7.4" height="7.2" fill="#fff" stroke="#333" stroke-width="0.6"/><circle cx="685.1" cy="140.8" r="2.4" fill="none" stroke="#111" stroke-width="0.9"/><path d="M685.1 137.4 V144.2 M681.6 140.8 H688.6" stroke="#111" stroke-width="0.8"/>
<rect x="689.8" y="137.2" width="7.2" height="7.2" fill="#a9dbea" stroke="#444" stroke-width="0.6"/>
<rect x="698" y="137.2" width="7.2" height="7.2" fill="#b9b9b9" stroke="#444" stroke-width="0.6"/>
<rect x="706.2" y="137.2" width="7.2" height="7.2" fill="#e2e2e2" stroke="#444" stroke-width="0.6"/>
<rect x="714.4" y="137.2" width="7.2" height="7.2" fill="#676767" stroke="#333" stroke-width="0.6"/>
<rect x="787.6" y="136.6" width="8.6" height="96.8" fill="#f2f2f2"/>
<path d="M790.6 142.6 l1.6 -2 l1.6 2" fill="none" stroke="#444" stroke-width="0.8"/>
<path d="M790.4 227.6 h3.4 l-1.7 2z" fill="#333"/>
<path d="M674 233.4 H787.6" stroke="#333" stroke-width="0.8"/>
<!-- swatches bottom icons -->
<g fill="none" stroke="#333" stroke-width="0.7">
<rect x="678.6" y="235.6" width="4.4" height="4" fill="#ccc"/><rect x="680" y="237" width="4.4" height="4" fill="#eee"/>
<rect x="702.4" y="236" width="1.6" height="4.6" fill="#333"/><rect x="704.6" y="237" width="1.6" height="3.6" fill="#333"/><rect x="706.8" y="238" width="1.6" height="2.6" fill="#333"/>
<rect x="720.4" y="236" width="6.6" height="5" stroke="#888" fill="#eee"/><path d="M721.6 238.4 h1.6 M724.4 238.4 h1.4" stroke="#aaa"/>
<path d="M737.6 236.4 h6 v4.6 h-6z" stroke="#777" fill="#f4f4f4"/><path d="M743 236 l1.8 -1 M743.6 237.4 h1.6" stroke="#222" stroke-width="1"/>
<rect x="757.8" y="236" width="5" height="5" stroke="#333"/><rect x="759" y="237.6" width="2.2" height="2.2" fill="#333" stroke="none"/>
<path d="M776 237 h4.6 l-0.6 4.4 h-3.4z M775.4 236.4 h5.8 M777.4 235.4 h1.8" stroke="#666" fill="#e4e4e4"/>
</g>
<rect x="683.6" y="240" width="1" height="1" fill="#222"/><rect x="709.4" y="240" width="1" height="1" fill="#222"/>
<path d="M792 243 L798 237 M794 243 L798 239 M796 243 L798 241" stroke="#bdbdbd" stroke-width="0.6"/>

<!-- GRADIENT PANEL -->
<rect x="672.5" y="247.4" width="127.5" height="48.2" fill="#ededed"/>
<rect x="672.5" y="247.4" width="127.5" height="14.8" fill="url(#tbg)"/>
<path d="M676 261.8 V255 Q676 253.4 677.6 253.4 H699 Q700.6 253.4 700.6 255 V261.8 Z" fill="#d9d9d9" stroke="#9a9a9a" stroke-width="0.7"/>
<path d="M702.6 262.2 V254.4 Q702.6 252.6 704.4 252.6 H743.6 Q745.4 252.6 745.4 254.4 V262.2 Z" fill="#f0f0f0" stroke="#9a9a9a" stroke-width="0.7"/>
<path d="M672.5 262.2 H702.6 M745.4 262.2 H800" stroke="#9a9a9a" stroke-width="0.7"/>
<text x="679.4" y="260" fill="#333" textLength="18.5" lengthAdjust="spacingAndGlyphs">Stroke</text>
<text x="705.4" y="259.8" font-size="5" fill="#444">◇</text>
<text x="711.2" y="260" fill="#333" textLength="24.1" lengthAdjust="spacingAndGlyphs">Gradient</text>
<path d="M738.2 256 L741.4 259.2 M741.4 256 L738.2 259.2" stroke="#444" stroke-width="0.7"/>
<path d="M783.6 251 h3" stroke="#555" stroke-width="0.9"/><path d="M791 248.6 L794.4 252 M794.4 248.6 L791 252" stroke="#444" stroke-width="0.8"/>
<path d="M788.6 258.8 h2.6 l-1.3 1.8z" fill="#222"/><path d="M792 257 h3.6 M792 258.6 h3.6 M792 260.2 h3.6" stroke="#555" stroke-width="0.8"/>
<rect x="677" y="266.2" width="107.2" height="21" fill="url(#gGr)" stroke="#444" stroke-width="0.9"/>
<path d="M792 294 L798 288 M794 294 L798 290 M796 294 L798 292" stroke="#bdbdbd" stroke-width="0.6"/>

<!-- LAYERS PANEL -->
<rect x="672.5" y="298" width="127.5" height="109.4" fill="#ededed"/>
<rect x="672.5" y="298" width="127.5" height="15.2" fill="url(#tbg)"/>
<path d="M676 313.4 V305.2 Q676 303.4 677.8 303.4 H704.6 Q706.4 303.4 706.4 305.2 V313.4 Z" fill="#f0f0f0" stroke="#9a9a9a" stroke-width="0.7"/>
<text x="679.4" y="311" fill="#333" textLength="17.1" lengthAdjust="spacingAndGlyphs">Layers</text>
<path d="M699.6 306.8 L702.8 310 M702.8 306.8 L699.6 310" stroke="#444" stroke-width="0.7"/>
<path d="M783.6 301.6 h3" stroke="#555" stroke-width="0.9"/><path d="M791 299.2 L794.4 302.6 M794.4 299.2 L791 302.6" stroke="#444" stroke-width="0.8"/>
<path d="M788.6 309.8 h2.6 l-1.3 1.8z" fill="#222"/><path d="M792 308 h3.6 M792 309.6 h3.6 M792 311.2 h3.6" stroke="#555" stroke-width="0.8"/>
<path d="M672.5 313.8 H787.6" stroke="#333" stroke-width="0.9"/>
<rect x="672.5" y="314.3" width="115" height="23.6" fill="#f4f4f4"/>
<rect x="708.6" y="314.4" width="77.8" height="11.4" fill="#3a8eee"/>
<path d="M672.5 326.1 H787.6" stroke="#cfcfcf" stroke-width="0.6"/>
<path d="M672.5 338.2 H787.6" stroke="#333" stroke-width="0.9"/>
<path d="M699.4 314 V338" stroke="#222" stroke-width="0.8"/>
<rect x="675.4" y="316.6" width="7" height="7" fill="#fafafa" stroke="#d0d0d0" stroke-width="0.6"/>
<rect x="685" y="328.6" width="7" height="7" fill="#fafafa" stroke="#d0d0d0" stroke-width="0.6"/>
<rect x="686.4" y="319.4" width="4.8" height="3.8" fill="#222"/><path d="M687.4 319.6 v-1 a1.4 1.4 0 0 1 2.8 0 v1" fill="none" stroke="#222" stroke-width="0.8"/>
<ellipse cx="678.8" cy="332" rx="3" ry="2" fill="#333"/><circle cx="678.8" cy="332" r="0.9" fill="#ddd"/><path d="M675.8 331 l-0.6 -1 M678.8 330 v-1.2 M681.8 331 l0.6 -1" stroke="#333" stroke-width="0.6"/>
<rect x="694.4" y="315.6" width="2.2" height="9.2" fill="#e03a3a"/>
<rect x="694.4" y="327.6" width="2.2" height="9.2" fill="#3a62d8"/>
<path d="M702.4 317.4 L705.6 320.2 L702.4 323 Z" fill="#f4f4f4" stroke="#444" stroke-width="0.6"/>
<path d="M702.4 329.4 L705.6 332.2 L702.4 335 Z" fill="#f4f4f4" stroke="#444" stroke-width="0.6"/>
<rect x="709.6" y="315.6" width="8.6" height="9" fill="#f8f8f8" stroke="#222" stroke-width="0.9"/>
<rect x="709.6" y="327.8" width="8.6" height="9" fill="#f0f0f0" stroke="#222" stroke-width="0.9"/><path d="M712 335 q1 -3 3.4 -4.4 q-2.4 4 -0.4 1.8 M713 330.4 l2 3.6" stroke="#555" stroke-width="0.7" fill="none"/>
<text x="721.2" y="322.6" font-weight="bold" font-size="6.6" fill="#fff" textLength="23" lengthAdjust="spacingAndGlyphs">Layer 2</text>
<text x="721.2" y="334.6" font-weight="bold" font-size="6.2" fill="#222" textLength="19" lengthAdjust="spacingAndGlyphs">Layer 1</text>
<circle cx="776.4" cy="320.2" r="2.2" fill="none" stroke="#173a80" stroke-width="0.8"/>
<circle cx="776.4" cy="332.2" r="2.2" fill="none" stroke="#222" stroke-width="0.8"/>
<path d="M783.8 314.4 h2.6 v2.6z" fill="#1a1a1a"/>
<rect x="787.6" y="313.8" width="8.6" height="82" fill="#f2f2f2"/>
<path d="M790.6 320.4 l1.6 -2 l1.6 2" fill="none" stroke="#444" stroke-width="0.8"/>
<path d="M790.4 390.6 h3.4 l-1.7 2z" fill="#333"/>
<path d="M674 395.9 H796" stroke="#333" stroke-width="0.9"/>
<text x="678.6" y="403.4" font-size="6.2" fill="#222">2 Layers</text>
<g fill="none" stroke="#333" stroke-width="0.7">
<circle cx="724.4" cy="401.6" r="2.2"/><path d="M724.4 401.6 v-2.2 M724.4 401.6 h1.6 M721.4 399 h1.4"/>
<rect x="741" y="399.6" width="4" height="4"/><path d="M737.6 400.6 h3 M739.4 399.4 l1.2 1.2 l-1.2 1.2"/>
<rect x="757.8" y="399.2" width="4.8" height="4.8"/><rect x="759" y="400.8" width="2.2" height="2.2" fill="#333" stroke="none"/>
<path d="M776 400.2 h4.6 l-0.6 4.2 h-3.4z M775.4 399.6 h5.8 M777.4 398.6 h1.8" fill="#ddd"/>
</g>
<path d="M792 406 L798 400 M794 406 L798 402 M796 406 L798 404" stroke="#bdbdbd" stroke-width="0.6"/>
</svg>
</div>
</body>
</html>
